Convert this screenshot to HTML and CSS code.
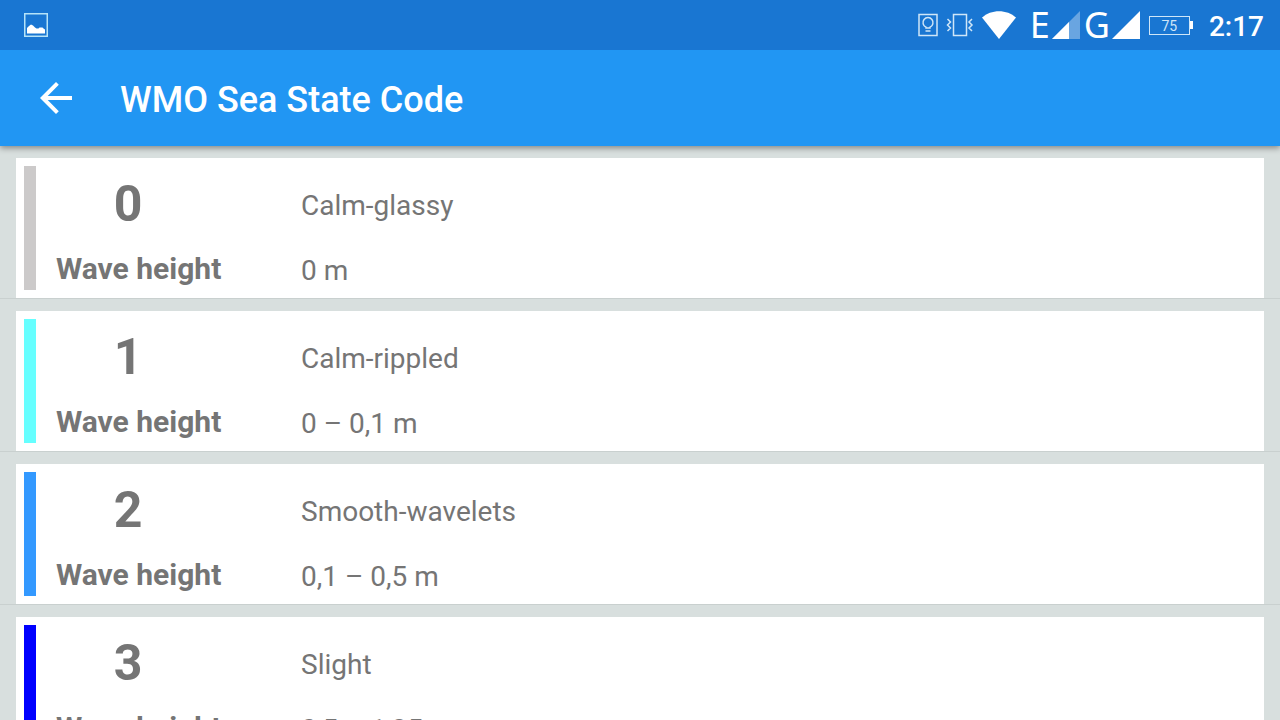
FILE: index.html
```html
<!DOCTYPE html>
<html lang="en">
<head>
<meta charset="UTF-8" />
<meta name="viewport" content="width=device-width, initial-scale=1" />
<title>WMO Sea State Code</title>
<link rel="stylesheet" href="styles.css">
</head>
<body>

<div class="status-bar">
  <svg class="icon-picture" width="24" height="24" viewBox="0 0 24 24">
    <rect x="0.75" y="0.75" width="22.5" height="22.5" fill="none" stroke="#b5e3f8" stroke-width="1.5" />
    <path d="M3 20.500v-5.500l2-2 2-1.500 2 1 2 2 1.500 1h2l1-1h3l1 1 1.500 1v4z" fill="#fff" />
  </svg>
  <div class="status-icons">
    <svg class="icon-lock" width="20" height="24" viewBox="0 0 20 24" fill="none" stroke="#cfe6f8" stroke-width="1.500">
      <rect x="1" y="1.500" width="18" height="21" />
      <path d="M8 15v-.8a5 5 0 1 1 4 0V15zM7.500 18h5" />
    </svg>
    <svg class="icon-vibrate" width="28" height="24" viewBox="0 0 28 24" fill="none" stroke="#cfe6f8" stroke-width="1.500">
      <rect x="7.500" y="1.500" width="13" height="21" />
      <path d="M1.500 6l3 3-3 3 3 3-3 3M26 6l-3 3 3 3-3 3 3 3" />
    </svg>
    <svg class="icon-wifi" width="34" height="28" viewBox="0 0 34 28">
      <path d="M0 6.500C9-2 25-2 34 6.500L17 28z" fill="#fff" />
    </svg>
    <span class="network">E</span>
    <svg class="icon-signal" width="28" height="28" viewBox="0 0 28 28">
      <path d="M0 28L28 0v28z" fill="#fff" opacity="0.35" />
      <path d="M0 28L17 11v17z" fill="#fff" />
    </svg>
    <span class="network network-g">G</span>
    <svg class="icon-signal" width="28" height="28" viewBox="0 0 28 28">
      <path d="M0 28L28 0v28z" fill="#fff" />
    </svg>
    <div class="battery">75</div>
    <span class="clock">2:17</span>
  </div>
</div>

<header class="app-bar">
  <button type="button" class="back" aria-label="Back">
    <svg width="32" height="32" viewBox="0 0 32 32">
      <path d="M32 14H7.700L18.800 2.800 16 0 0 16l16 16 2.800-2.800L7.700 18H32z" fill="#fff" />
    </svg>
  </button>
  <h1>WMO Sea State Code</h1>
</header>

<main class="list">
  <div class="item">
    <div class="card">
      <div class="color-bar glassy"></div>
      <div class="details">
        <div class="code">0</div>
        <div class="state">Calm-glassy</div>
        <div class="label">Wave height</div>
        <div class="height">0 m</div>
      </div>
    </div>
  </div>
  <div class="item">
    <div class="card">
      <div class="color-bar rippled"></div>
      <div class="details">
        <div class="code">1</div>
        <div class="state">Calm-rippled</div>
        <div class="label">Wave height</div>
        <div class="height">0 – 0,1 m</div>
      </div>
    </div>
  </div>
  <div class="item">
    <div class="card">
      <div class="color-bar wavelets"></div>
      <div class="details">
        <div class="code">2</div>
        <div class="state">Smooth-wavelets</div>
        <div class="label">Wave height</div>
        <div class="height">0,1 – 0,5 m</div>
      </div>
    </div>
  </div>
  <div class="item">
    <div class="card">
      <div class="color-bar slight"></div>
      <div class="details">
        <div class="code">3</div>
        <div class="state">Slight</div>
        <div class="label">Wave height</div>
        <div class="height">0,5 – 1,25 m</div>
      </div>
    </div>
  </div>
</main>

</body>
</html>
```
FILE: styles.css
```css
* {
  box-sizing: border-box;
}
body {
  margin: 0;
  height: 100vh;
  display: flex;
  flex-direction: column;
  overflow: hidden;
  background: #d8dfde;
  font-family: Roboto, sans-serif;
  color: #757575;
}
svg {
  display: block;
  flex-shrink: 0;
}

/* status bar */
.status-bar {
  flex-shrink: 0;
  height: 50px;
  padding: 0 16px 0 24px;
  display: flex;
  align-items: center;
  justify-content: space-between;
  background: #1976d2;
  color: #fff;
}
.status-icons {
  display: flex;
  align-items: center;
}
.icon-vibrate {
  margin: 0 8px;
}
.network {
  margin: 0 2px 0 14px;
  font-family: "Noto Sans", sans-serif;
  font-size: 36px;
  line-height: 50px;
}
.network-g {
  margin-left: 4px;
}
.battery {
  position: relative;
  width: 41px;
  height: 19px;
  margin: 0 19px 0 9px;
  border: 1px solid #cfe6f8;
  color: #cfe6f8;
  font-size: 14px;
  line-height: 18px;
  text-align: center;
}
.battery::after {
  content: "";
  position: absolute;
  top: 4px;
  right: -4px;
  width: 3px;
  height: 8px;
  background: #fff;
}
.clock {
  padding-top: 2px;
  font-size: 28px;
  font-weight: 500;
}

/* app bar */
.app-bar {
  position: relative;
  z-index: 1;
  flex-shrink: 0;
  height: 96px;
  padding: 0 40px;
  display: flex;
  align-items: center;
  gap: 48px;
  background: #2196f3;
  box-shadow: 0 2px 6px rgba(0, 0, 0, 0.4);
  clip-path: inset(0 0 -12px 0);
}
.back {
  padding: 0;
  border: none;
  background: none;
  cursor: pointer;
}
.app-bar h1 {
  margin: 0;
  padding-top: 4px;
  font-size: 36px;
  font-weight: 500;
  color: #fff;
}

/* list */
.list {
  flex: 1;
  min-height: 0;
  overflow-y: auto;
  scrollbar-width: none;
}
.item {
  padding: 12px 16px 0;
  border-bottom: 1px solid #c9d0cf;
}
.card {
  display: flex;
  gap: 20px;
  padding: 8px;
  background: #fff;
}
.color-bar {
  width: 12px;
}
.glassy {
  background: #cccaca;
}
.rippled {
  background: #66ffff;
}
.wavelets {
  background: #3399ff;
}
.slight {
  background: #0000ff;
}
.details {
  flex: 1;
  display: grid;
  grid-template-columns: 245px 1fr;
  grid-template-rows: 76px 48px;
  align-items: center;
  font-size: 28px;
}
.code {
  width: 144px;
  text-align: center;
  font-size: 50px;
  font-weight: 700;
}
.state {
  padding-top: 2px;
}
.label {
  padding-top: 4px;
  font-size: 30px;
  font-weight: 700;
}
.height {
  padding-top: 8px;
}
```
